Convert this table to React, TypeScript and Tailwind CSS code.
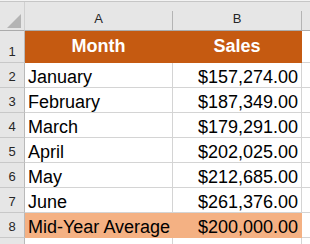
const rows = [
  { n: 2, month: 'January', sales: '$157,274.00' },
  { n: 3, month: 'February', sales: '$187,349.00' },
  { n: 4, month: 'March', sales: '$179,291.00' },
  { n: 5, month: 'April', sales: '$202,025.00' },
  { n: 6, month: 'May', sales: '$212,685.00' },
  { n: 7, month: 'June', sales: '$261,376.00' },
]

const font = { fontFamily: '"Liberation Sans", Arial, sans-serif' }

const RowNum = ({ n, h }: { n?: number; h: string }) => (
  <div className={`${h} flex items-end justify-center pb-[3px] bg-[#e6e6e6] border-r border-r-[#b9b9b9] border-b border-b-[#c8c8c8] text-[13px] leading-[15px] text-[#262626]`}>
    {n}
  </div>
)

export default function App() {
  return (
    <div className="w-[310px] h-[244px] overflow-hidden bg-white" style={font}>
      {/* strip above headers */}
      <div className="h-[2px] bg-[#f3f3f3] border-b border-[#c6c6c6]" />

      <div className="grid grid-cols-[25px_148px_129px_1fr]">
        {/* column headers */}
        <div className="h-[29px] bg-[#e6e6e6] border-b border-b-[#ababab] border-r border-r-[#d0d0d0] flex items-end justify-end pr-[3px] pb-[2px]">
          <svg width="14" height="14" viewBox="0 0 14 14">
            <polygon points="14,0 14,14 0,14" fill="#b4b4b4" />
          </svg>
        </div>
        <div className="h-[29px] bg-[#e6e6e6] border-b border-b-[#ababab] flex items-end">
          <span className="flex-1 text-center text-[13px] leading-[15px] pb-[4px] text-[#262626]">A</span>
          <div className="w-px h-[19px] bg-[#b4b4b4]" />
        </div>
        <div className="h-[29px] bg-[#e6e6e6] border-b border-b-[#ababab] flex items-end">
          <span className="flex-1 text-center text-[13px] leading-[15px] pb-[4px] text-[#262626]">B</span>
          <div className="w-px h-[19px] bg-[#b4b4b4]" />
        </div>
        <div className="h-[29px] bg-[#e6e6e6] border-b border-b-[#ababab]" />

        {/* row 1 */}
        <RowNum n={1} h="h-[32px]" />
        <div className="h-[32px] bg-[#c55a11] border-b border-r border-[#c55a11] flex items-end justify-center pb-[6px] text-[18px] leading-[20px] font-bold text-white">
          Month
        </div>
        <div className="h-[32px] bg-[#c55a11] border-b border-r border-[#c55a11] flex items-end justify-center pb-[6px] text-[18px] leading-[20px] font-bold text-white">
          Sales
        </div>
        <div className="h-[32px] border-b border-[#d4d4d4]" />

        {rows.map(r => (
          <div key={r.n} className="contents">
            <RowNum n={r.n} h="h-[25px]" />
            <div className="h-[25px] border-b border-r border-[#d4d4d4] flex items-end pl-[3px] text-[18px] leading-[20px] text-black">
              {r.month}
            </div>
            <div className="h-[25px] border-b border-r border-[#d4d4d4] flex items-end justify-end pr-[3px] text-[18px] leading-[20px] text-black">
              {r.sales}
            </div>
            <div className="h-[25px] border-b border-[#d4d4d4]" />
          </div>
        ))}

        {/* row 8 */}
        <RowNum n={8} h="h-[25px]" />
        <div className="h-[25px] bg-[#f4b183] border-b border-[#f4b183] flex items-end pl-[3px] text-[18px] leading-[20px] text-black whitespace-nowrap">
          Mid-Year Average
        </div>
        <div className="h-[25px] bg-[#f4b183] border-b border-r border-[#f4b183] flex items-end justify-end pr-[3px] text-[18px] leading-[20px] text-black">
          $200,000.00
        </div>
        <div className="h-[25px] border-b border-[#d4d4d4]" />

        {/* row 9, cut off at the bottom edge */}
        <RowNum h="h-[25px]" />
        <div className="h-[25px] border-r border-[#d4d4d4]" />
        <div className="h-[25px] border-r border-[#d4d4d4]" />
        <div className="h-[25px]" />
      </div>
    </div>
  )
}
